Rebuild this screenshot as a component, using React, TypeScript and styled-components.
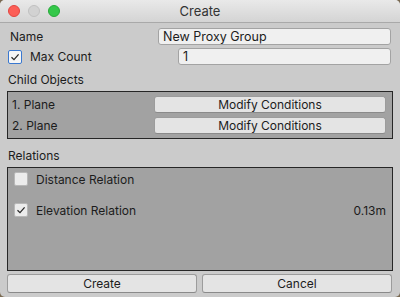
import React from 'react';
import styled, { createGlobalStyle } from 'styled-components';

const GlobalStyle = createGlobalStyle`
  html, body {
    margin: 0;
    padding: 0;
    width: 400px;
    height: 297px;
    overflow: hidden;
    background: #7a6a52;
  }
  * { box-sizing: border-box; }
`;

const Window = styled.div`
  width: 400px;
  height: 297px;
  display: flex;
  flex-direction: column;
  background: #cbcbcb;
  border-radius: 5px;
  overflow: hidden;
  font-family: Inter, "Noto Sans", sans-serif;
  font-size: 12px;
  color: #1c1c1c;
`;

const TitleBar = styled.div`
  position: relative;
  height: 23px;
  flex: none;
  display: flex;
  align-items: center;
  justify-content: center;
  background: linear-gradient(#e9e9e9, #d4d4d4);
  border-bottom: 1px solid #a9a9a9;
  font-size: 13px;
  color: #333;
`;

const Lights = styled.div`
  position: absolute;
  left: 8px;
  top: 5px;
  display: flex;
  gap: 8px;
`;

const Light = styled.span<{ $c: string; $b: string }>`
  width: 12px;
  height: 12px;
  border-radius: 50%;
  background: ${(p) => p.$c};
  border: 1px solid ${(p) => p.$b};
`;

const Content = styled.div`
  flex: 1;
  display: flex;
  flex-direction: column;
  padding: 5px 7px 0 7px;
`;

const FieldRow = styled.div<{ $labelW: number; $mt?: number }>`
  display: grid;
  grid-template-columns: ${(p) => p.$labelW}px 1fr;
  align-items: center;
  height: 17px;
  margin-top: ${(p) => p.$mt ?? 0}px;
  padding-right: 2px;
`;

const Label = styled.span<{ $pl?: number }>`
  padding-left: ${(p) => p.$pl ?? 0}px;
  white-space: nowrap;
`;

const ToggleLabel = styled.label`
  display: flex;
  align-items: center;
  gap: 8px;
  padding-left: 1px;
`;

const TextField = styled.div`
  height: 17px;
  background: #f0f0f0;
  border: 1px solid #a3a3a3;
  border-radius: 3px;
  padding: 0 4px;
  line-height: 15px;
  font-size: 12.5px;
`;

const Check = styled.span<{ $focus?: boolean }>`
  width: 14px;
  height: 14px;
  flex: none;
  display: inline-flex;
  align-items: center;
  justify-content: center;
  background: ${(p) => (p.$focus ? '#f6f6f6' : '#ececec')};
  border: 1px solid ${(p) => (p.$focus ? '#3a78d0' : '#b8b8b8')};
  border-radius: 2px;
`;

const SectionTitle = styled.div<{ $mt: number }>`
  margin-top: ${(p) => p.$mt}px;
  height: 16px;
  line-height: 16px;
  padding-left: 1px;
`;

const Box = styled.div<{ $h: number; $gap: number; $pt: number }>`
  margin-top: 3px;
  height: ${(p) => p.$h}px;
  background: #a2a2a2;
  border: 1px solid #262626;
  display: flex;
  flex-direction: column;
  gap: ${(p) => p.$gap}px;
  padding: ${(p) => p.$pt}px 6px 0 4px;
`;

const ChildRow = styled.div`
  display: grid;
  grid-template-columns: 142px 1fr;
  align-items: center;
  height: 17px;
`;

const Button = styled.div`
  height: 17px;
  background: #e4e4e4;
  border: 1px solid #9c9c9c;
  border-bottom-color: #8a8a8a;
  border-radius: 3px;
  display: flex;
  align-items: center;
  justify-content: center;
  font-size: 12px;
`;

const RelationRow = styled.div`
  display: flex;
  align-items: center;
  justify-content: space-between;
  height: 16px;
  padding-left: 1px;
`;

const Footer = styled.div`
  display: grid;
  grid-template-columns: 1fr 1fr;
  gap: 5px;
  margin-top: 3px;
  padding-right: 1px;
`;

const FooterButton = styled(Button)`
  height: 19px;
`;

const CheckMark = () => (
  <svg width="10" height="10" viewBox="0 0 10 10">
    <path d="M1.5 5.2 L4 7.6 L8.6 2.4" fill="none" stroke="#2a2a2a" strokeWidth="1.3" />
  </svg>
);

const App: React.FC = () => {
  return (
    <>
      <GlobalStyle />
      <Window>
        <TitleBar>
          <Lights>
            <Light $c="#fc5f57" $b="#e14640" />
            <Light $c="#d2d2d2" $b="#c0c0c0" />
            <Light $c="#34c84a" $b="#27a93a" />
          </Lights>
          Create
        </TitleBar>
        <Content>
          <FieldRow $labelW={151}>
            <Label $pl={3}>Name</Label>
            <TextField>New Proxy Group</TextField>
          </FieldRow>
          <FieldRow $labelW={171} $mt={3}>
            <ToggleLabel>
              <Check $focus>
                <CheckMark />
              </Check>
              Max Count
            </ToggleLabel>
            <TextField>1</TextField>
          </FieldRow>
          <SectionTitle $mt={7}>Child Objects</SectionTitle>
          <Box $h={48} $gap={4} $pt={4}>
            <ChildRow>
              <span>1. Plane</span>
              <Button>Modify Conditions</Button>
            </ChildRow>
            <ChildRow>
              <span>2. Plane</span>
              <Button>Modify Conditions</Button>
            </ChildRow>
          </Box>
          <SectionTitle $mt={9}>Relations</SectionTitle>
          <Box $h={104} $gap={15} $pt={3}>
            <RelationRow>
              <ToggleLabel>
                <Check />
                Distance Relation
              </ToggleLabel>
            </RelationRow>
            <RelationRow>
              <ToggleLabel>
                <Check>
                  <CheckMark />
                </Check>
                Elevation Relation
              </ToggleLabel>
              <span>0.13m</span>
            </RelationRow>
          </Box>
          <Footer>
            <FooterButton>Create</FooterButton>
            <FooterButton>Cancel</FooterButton>
          </Footer>
        </Content>
      </Window>
    </>
  );
};

export default App;
